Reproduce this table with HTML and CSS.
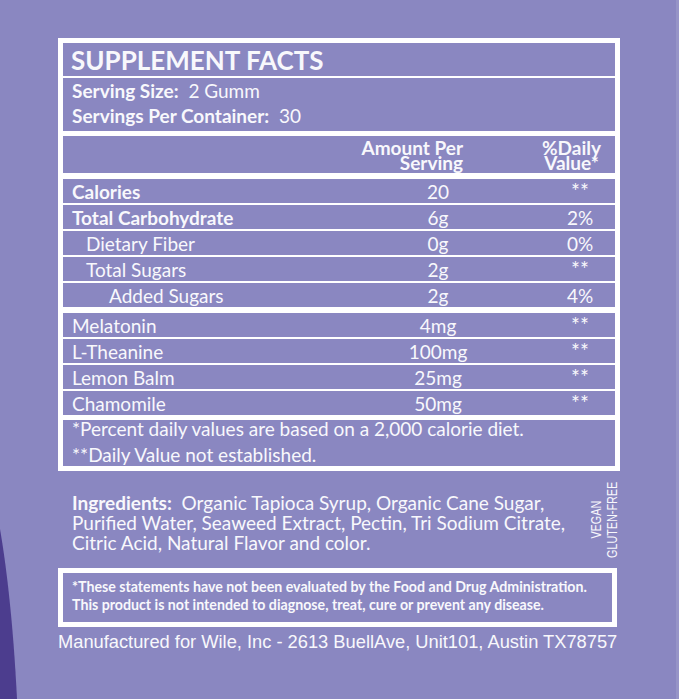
FILE: index.html
```html
<!DOCTYPE html>
<html>
<head>
<meta charset="utf-8">
<link rel="stylesheet" href="styles.css">
</head>
<body>
<div class="page">
  <div class="facts">
    <div class="cell title">SUPPLEMENT FACTS</div>
    <div class="cell serving">
      <div><b>Serving Size:</b>&nbsp; 2 Gumm</div>
      <div><b>Servings Per Container:</b>&nbsp; 30</div>
    </div>
    <div class="cell head">
      <span class="h-amt">Amount Per<br>Serving</span>
      <span class="h-dv">%Daily<br>Value*</span>
    </div>
    <div class="group">
      <div class="cell row bold"><span class="lbl">Calories</span><span class="amt">20</span><span></span><span class="dv star">**</span></div>
      <div class="cell row bold"><span class="lbl">Total Carbohydrate</span><span class="amt">6g</span><span></span><span class="dv">2%</span></div>
      <div class="cell row"><span class="lbl ind1">Dietary Fiber</span><span class="amt">0g</span><span></span><span class="dv">0%</span></div>
      <div class="cell row"><span class="lbl ind1">Total Sugars</span><span class="amt">2g</span><span></span><span class="dv star">**</span></div>
      <div class="cell row"><span class="lbl ind2">Added Sugars</span><span class="amt">2g</span><span></span><span class="dv">4%</span></div>
    </div>
    <div class="group">
      <div class="cell row"><span class="lbl">Melatonin</span><span class="amt">4mg</span><span></span><span class="dv star">**</span></div>
      <div class="cell row"><span class="lbl">L-Theanine</span><span class="amt">100mg</span><span></span><span class="dv star">**</span></div>
      <div class="cell row"><span class="lbl">Lemon Balm</span><span class="amt">25mg</span><span></span><span class="dv star">**</span></div>
      <div class="cell row"><span class="lbl">Chamomile</span><span class="amt">50mg</span><span></span><span class="dv star">**</span></div>
    </div>
    <div class="cell note">
      <div class="note-l1">*Percent daily values are based on a 2,000 calorie diet.</div>
      <div>**Daily Value not established.</div>
    </div>
  </div>

  <div class="ingredients">
    <p class="ing-text"><b>Ingredients:</b>&nbsp; Organic Tapioca Syrup, Organic Cane Sugar,<br>Purified Water, Seaweed Extract, Pectin, Tri Sodium Citrate,<br>Citric Acid, Natural Flavor and color.</p>
    <div class="badges">VEGAN<br>GLUTEN-FREE</div>
  </div>

  <div class="disclaimer">
    <div>*These statements have not been evaluated by the Food and Drug Administration.</div>
    <div>This product is not intended to diagnose, treat, cure or prevent any disease.</div>
  </div>

  <div class="mfg">Manufactured for Wile, Inc - 2613 BuellAve, Unit101, Austin TX78757</div>

  <svg class="swoosh" width="30" height="170" viewBox="0 0 30 170">
    <path d="M0 0 C6 35 13 90 17 170 L0 170 Z" fill="#4c3d8e"/>
  </svg>
</div>
</body>
</html>
```

FILE: styles.css
```css
html, body {
  margin: 0;
  padding: 0;
}
body {
  background: #8a87c1;
  width: 679px;
  height: 699px;
  overflow: hidden;
}
.page {
  position: relative;
  box-sizing: border-box;
  width: 679px;
  height: 699px;
  padding: 38px 0 0 58px;
  border-right: 3px solid #9694c7;
  color: #f8f8fc;
  font-family: Lato, "Open Sans", sans-serif;
}
.facts {
  width: 552px;
  border: 5px solid #fff;
  background: #fff;
  display: flex;
  flex-direction: column;
  gap: 2px;
}
.cell {
  background: #8a87c1;
  box-sizing: border-box;
  white-space: nowrap;
}
.title {
  height: 33px;
  display: flex;
  align-items: center;
  padding-left: 8px;
  font-weight: 700;
  font-size: 26px;
}
.serving {
  height: 53px;
  padding: 0 0 0 9px;
  font-size: 19px;
  line-height: 25px;
}
.serving b { font-weight: 700; }
.head {
  height: 37px;
  margin-top: 3px;
  display: grid;
  grid-template-columns: 425px 127px;
  align-items: center;
  font-weight: 700;
  font-size: 19px;
  line-height: 15px;
}
.h-amt {
  text-align: right;
  padding-right: 25px;
}
.h-dv {
  text-align: center;
  padding-left: 40px;
}
.group {
  margin-top: 4px;
  display: flex;
  flex-direction: column;
  gap: 2px;
  background: #fff;
}
.row {
  height: 24px;
  display: grid;
  grid-template-columns: 325px 100px 57px 70px;
  align-items: center;
  font-size: 19px;
}
.row.bold .lbl { font-weight: 700; }
.lbl { padding-left: 9px; }
.lbl.ind1 { padding-left: 23px; }
.lbl.ind2 { padding-left: 46px; }
.amt { text-align: center; }
.dv { text-align: center; }
.star {
  font-size: 21px;
  line-height: 24px;
  align-self: start;
}
.note {
  height: 46px;
  margin-top: 3px;
  padding: 0 0 0 9px;
  font-size: 19px;
  line-height: 26px;
}
.note-l1 { margin-top: -4px; }
.ingredients {
  width: 562px;
  height: 97px;
  display: flex;
  align-items: flex-start;
}
.ing-text {
  margin: 22px 0 0 0;
  padding-left: 14px;
  font-size: 19px;
  line-height: 20px;
  white-space: nowrap;
}
.ing-text b { font-weight: 700; }
.badges {
  margin-left: auto;
  align-self: center;
  writing-mode: vertical-rl;
  white-space: nowrap;
  transform: rotate(180deg) scaleY(0.72);
  font-family: "Liberation Sans", Arial, sans-serif;
  font-size: 15px;
  line-height: 16px;
  text-align: center;
}
.disclaimer {
  box-sizing: border-box;
  width: 559px;
  height: 59px;
  border: 5px solid #fff;
  padding: 5px 0 0 9px;
  font-weight: 700;
  font-size: 14.2px;
  line-height: 18px;
  white-space: nowrap;
}
.mfg {
  margin-top: 4px;
  font-family: "Liberation Sans", Arial, sans-serif;
  font-size: 18.3px;
  line-height: 22px;
  white-space: nowrap;
}
.swoosh {
  position: absolute;
  left: 0;
  bottom: 0;
}
```
